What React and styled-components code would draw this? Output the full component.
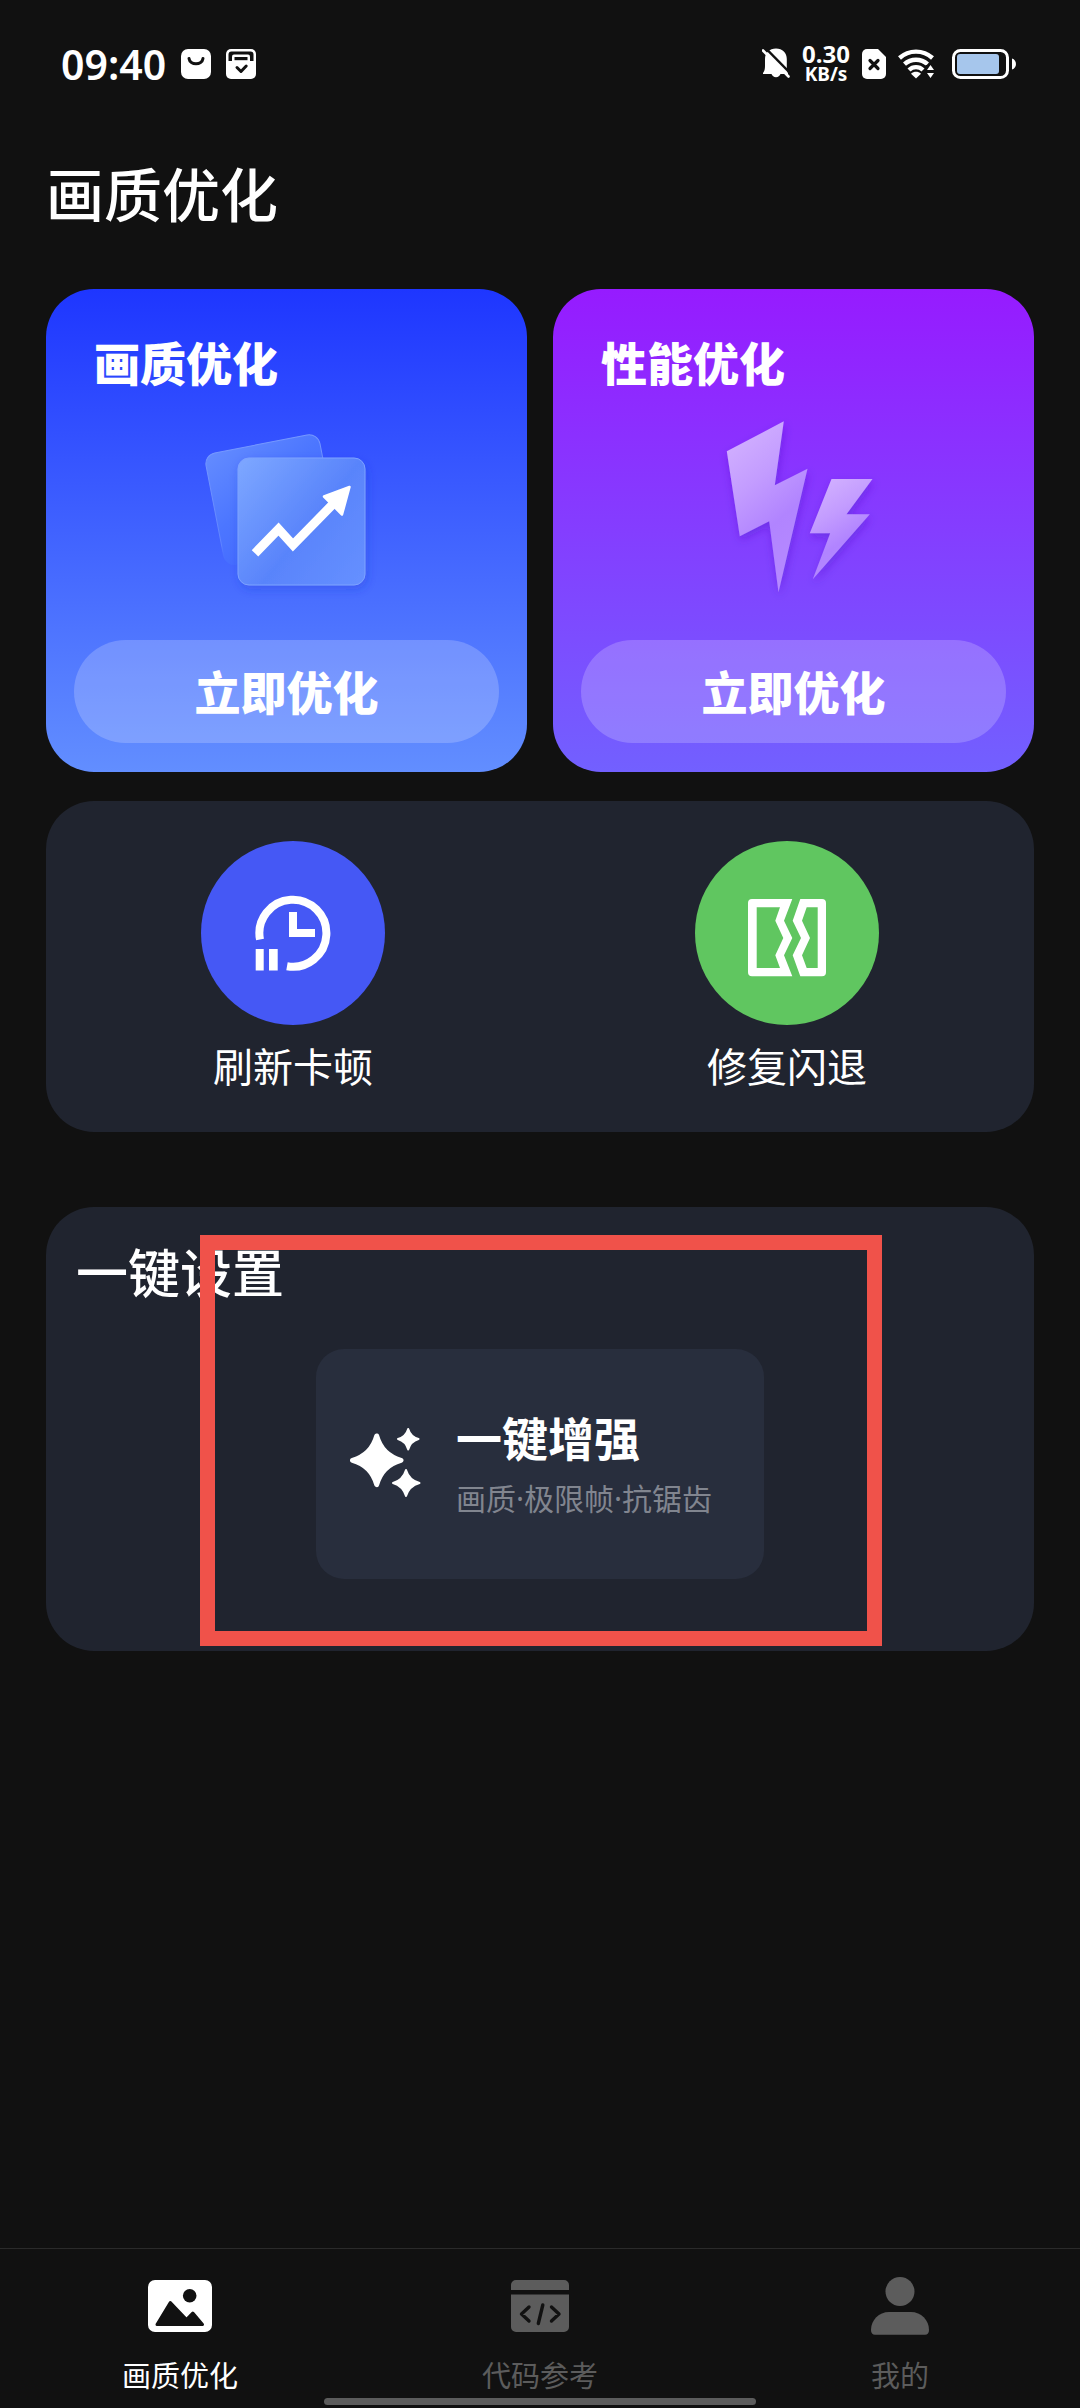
import React from "react";
import styled, { createGlobalStyle } from "styled-components";

const GlobalStyle = createGlobalStyle`
  *, *::before, *::after { box-sizing: border-box; }
  body {
    margin: 0;
    background: #111111;
    color: #ffffff;
    font-family: "Noto Sans", "Noto Sans CJK SC", sans-serif;
  }
  svg { display: block; flex: none; }
`;

const Screen = styled.div`
  min-height: 100vh;
  display: flex;
  flex-direction: column;
`;

const StatusBar = styled.header`
  height: 128px;
  padding: 0 64px 0 61px;
  display: flex;
  align-items: center;
  justify-content: space-between;
`;

const StatusGroup = styled.div`
  display: flex;
  align-items: center;
  gap: ${(p) => p.$gap}px;
`;

const Clock = styled.time`
  font-size: 41px;
  line-height: 48px;
  font-weight: 600;
`;

const NetSpeed = styled.div`
  display: flex;
  flex-direction: column;
  align-items: center;
  font-weight: 700;
`;

const SpeedValue = styled.span`
  font-size: 24px;
  line-height: 20px;
`;

const SpeedUnit = styled.span`
  font-size: 19px;
  line-height: 20px;
`;

const Battery = styled.span`
  margin-left: 6px;
`;

const Content = styled.main`
  flex: 1;
  padding: 27px 46px 54px;
  display: flex;
  flex-direction: column;
`;

const PageTitle = styled.h1`
  margin: 0 0 54px;
  font-size: 58px;
  line-height: 80px;
  font-weight: 500;
`;

const CardRow = styled.section`
  display: grid;
  grid-template-columns: 1fr 1fr;
  gap: 26px;
`;

const BoostCard = styled.article`
  display: flex;
  flex-direction: column;
  align-items: center;
  padding: 44px 28px 29px;
  border-radius: 48px;
  background: linear-gradient(180deg, ${(p) => p.$from}, ${(p) => p.$to});
`;

const BoostTitle = styled.h2`
  align-self: stretch;
  margin: 0 20px 14px;
  font-size: 46px;
  line-height: 60px;
  font-weight: 900;
`;

const BoostButton = styled.button`
  align-self: stretch;
  height: 103px;
  margin-top: 13px;
  border: 0;
  border-radius: 52px;
  background: rgba(255, 255, 255, 0.2);
  color: #ffffff;
  font-family: inherit;
  font-size: 46px;
  line-height: 60px;
  font-weight: 900;
  cursor: pointer;
`;

const Panel = styled.section`
  position: relative;
  border-radius: 48px;
  background: #20242f;
`;

const ToolPanel = styled(Panel)`
  margin-top: 29px;
  padding: 40px 0 37px;
  display: grid;
  grid-template-columns: 1fr 1fr;
`;

const ToolButton = styled.button`
  display: flex;
  flex-direction: column;
  align-items: center;
  gap: 14px;
  padding: 0;
  border: 0;
  background: none;
  color: #ffffff;
  font-family: inherit;
  font-size: 40px;
  line-height: 56px;
  cursor: pointer;
`;

const ToolDisc = styled.span`
  width: 184px;
  height: 184px;
  border-radius: 50%;
  background: ${(p) => p.$color};
`;

const SetupPanel = styled(Panel)`
  margin-top: 75px;
  padding: 30px 30px 72px;
  display: flex;
  flex-direction: column;
  align-items: center;
`;

const SetupTitle = styled.h2`
  align-self: stretch;
  margin: 0 0 40px;
  font-size: 52px;
  line-height: 72px;
  font-weight: 500;
`;

const EnhanceButton = styled.button`
  display: flex;
  align-items: center;
  gap: 34px;
  padding: 59px 52px 60px 34px;
  border: 0;
  border-radius: 28px;
  background: #282e3d;
  color: #ffffff;
  font-family: inherit;
  text-align: left;
  cursor: pointer;
`;

const EnhanceText = styled.span`
  display: flex;
  flex-direction: column;
  gap: 11px;
`;

const EnhanceName = styled.span`
  font-size: 46px;
  line-height: 60px;
  font-weight: 700;
`;

const EnhanceNote = styled.span`
  font-size: 30px;
  line-height: 40px;
  color: #81858f;
`;

const Highlight = styled.div`
  position: absolute;
  inset: 28px 152px 5px 154px;
  border: 15px solid #f0524a;
  pointer-events: none;
`;

const TabBar = styled.nav`
  position: sticky;
  bottom: 0;
  display: grid;
  grid-template-columns: repeat(3, 1fr);
  padding: 25px 0 12px;
  border-top: 1px solid #2b2b2b;
  background: #111111;
`;

const Tab = styled.a`
  display: flex;
  flex-direction: column;
  align-items: center;
  gap: 18px;
  color: ${(p) => (p.$active ? "#ffffff" : "#5c5c5c")};
  font-size: 29px;
  line-height: 40px;
  text-decoration: none;
`;

const HomeIndicator = styled.div`
  position: absolute;
  left: 30%;
  right: 30%;
  bottom: 3px;
  height: 7px;
  border-radius: 4px;
  background: #5c5c5c;
`;

const BagIcon = () => (
  <svg width="30" height="30" viewBox="0 0 30 30" aria-hidden="true">
    <rect width="30" height="30" rx="7" fill="#fff" />
    <path d="M8 9.5c1 7 13 7 14 0" fill="none" stroke="#111" strokeWidth="3" strokeLinecap="round" />
  </svg>
);

const InboxIcon = () => (
  <svg width="30" height="30" viewBox="0 0 30 30" aria-hidden="true">
    <rect width="30" height="30" rx="5" fill="#fff" />
    <path d="M2.5 12V5.5a3 3 0 0 1 3-3h19a3 3 0 0 1 3 3V12z" fill="#111" />
    <path d="M6 12.2V7.5a2 2 0 0 1 2-2h14a2 2 0 0 1 2 2v4.7z" fill="#fff" />
    <rect x="8.5" y="8" width="13" height="3.2" fill="#111" />
    <path d="M11 18.5l4 4 5.2-5.5" fill="none" stroke="#111" strokeWidth="3" strokeLinecap="round" strokeLinejoin="round" />
  </svg>
);

const MutedBellIcon = () => (
  <svg width="28" height="32" viewBox="0 0 28 32" aria-hidden="true">
    <path d="M14 .5C7.500 .5 3 5 3 11v7c0 3-.5 5-2 7v1h8.500a4.800 4.800 0 0 0 9 0H26V25c-1-1-1.200-3-1.200-6v-8C24.800 5 20.500 .5 14 .5z" fill="#fff" />
    <path d="M2 -1.500l26 26.500" stroke="#111" strokeWidth="2.400" />
    <path d="M1 2.500l25.500 26" stroke="#fff" strokeWidth="2.600" strokeLinecap="round" />
  </svg>
);

const SimIcon = () => (
  <svg width="24" height="30" viewBox="0 0 24 30" aria-hidden="true">
    <path d="M5 0h11l8 8v17a5 5 0 0 1-5 5H5a5 5 0 0 1-5-5V5a5 5 0 0 1 5-5z" fill="#fff" />
    <path d="M8 11.5l8 8M16 11.5l-8 8" stroke="#111" strokeWidth="3.2" strokeLinecap="round" />
  </svg>
);

const WifiIcon = () => (
  <svg width="36" height="30" viewBox="0 0 36 30" aria-hidden="true">
    <g fill="none" stroke="#fff" strokeWidth="4.4">
      <path d="M1.500 9C11 .5 25 .5 34.500 9" />
      <path d="M6.500 15.200c6.500-6 16.500-6 23 0" />
      <path d="M11 21c4-3.800 10-3.800 14 0" />
    </g>
    <path d="M18 29.500l-5-4.800c3-2.600 7-2.600 10 0z" fill="#fff" />
    <path d="M27.500 16H36v14h-7z" fill="#111" />
    <path d="M32.500 16l3.500 5h-7zM32.500 29l3.500-5h-7z" fill="#fff" />
  </svg>
);

const BatteryIcon = () => (
  <svg width="64" height="30" viewBox="0 0 64 30" aria-hidden="true">
    <rect x="1.500" y="1.500" width="54" height="27" rx="7" fill="none" stroke="#fff" strokeWidth="3" />
    <rect x="5" y="5" width="42" height="20" rx="3" fill="#a6c6ec" />
    <path d="M60 9.500c5.300 1.500 5.300 9.500 0 11z" fill="#fff" />
  </svg>
);

const ChartArt = () => (
  <svg width="260" height="220" viewBox="0 0 260 220" aria-hidden="true">
    <defs>
      <linearGradient id="sheetBack" x1="0" y1="0" x2="0.6" y2="1">
        <stop offset="0" stopColor="#648cff" />
        <stop offset="0.5" stopColor="#4c76ff" />
        <stop offset="1" stopColor="#4166ff" />
      </linearGradient>
      <linearGradient id="sheetEdge" x1="0" y1="0" x2="0" y2="1">
        <stop offset="0" stopColor="#7598ff" />
        <stop offset="0.8" stopColor="#5f84ff" />
        <stop offset="1" stopColor="#4166ff" stopOpacity="0" />
      </linearGradient>
      <linearGradient id="sheetFront" x1="0" y1="0.1" x2="1" y2="0.9">
        <stop offset="0" stopColor="#7ba5ff" />
        <stop offset="0.55" stopColor="#5984fb" />
        <stop offset="1" stopColor="#658fff" />
      </linearGradient>
      <filter id="sheetShadow" x="-20%" y="-20%" width="140%" height="140%">
        <feDropShadow dx="2" dy="4" stdDeviation="5" floodColor="#1f3bd8" floodOpacity="0.3" />
      </filter>
    </defs>
    <rect width="116" height="114" rx="11" transform="translate(47 48) rotate(-11)" fill="url(#sheetBack)" stroke="url(#sheetEdge)" strokeWidth="1" />
    <rect x="81" y="51" width="127" height="127" rx="11" fill="url(#sheetFront)" stroke="#7da2ff" strokeWidth="1" filter="url(#sheetShadow)" />
    <path d="M98 146.300L121.500 122 136 138 178 95" fill="none" stroke="#fff" strokeWidth="9" />
    <path d="M192.500 80L167 89.500l18 18z" fill="#fff" stroke="#fff" strokeWidth="2.500" strokeLinejoin="round" />
  </svg>
);

const BoltArt = () => (
  <svg width="260" height="220" viewBox="0 0 260 220" aria-hidden="true">
    <defs>
      <linearGradient id="boltFill" x1="0.2" y1="0" x2="0.6" y2="1">
        <stop offset="0" stopColor="#d3b2ff" />
        <stop offset="0.35" stopColor="#c39cff" />
        <stop offset="0.65" stopColor="#b184ff" />
        <stop offset="1" stopColor="#b68aff" />
      </linearGradient>
      <filter id="boltShadow" x="-20%" y="-20%" width="140%" height="140%">
        <feDropShadow dx="1" dy="4" stdDeviation="4" floodColor="#4a1fc8" floodOpacity="0.4" />
      </filter>
    </defs>
    <g fill="url(#boltFill)" filter="url(#boltShadow)">
      <path d="M119.800 14.300L110.800 78.300 143.500 61.700 114.500 185.300 105.200 114.300 75.800 129.300 62.800 44.300z" />
      <path d="M167.500 72H208.500L182.500 107.300H205.800L148.800 172.300 166.200 126.300H145.800z" />
    </g>
  </svg>
);

const LagIcon = () => (
  <svg width="184" height="184" viewBox="0 0 184 184" aria-hidden="true">
    <g fill="none" stroke="#fff" strokeWidth="8">
      <path d="M59 98.500A33.500 33.500 0 1 1 86 125.200" />
      <path d="M92 71V92H114" />
    </g>
    <path d="M54.700 108h8v21.500h-8zM68 108h8.700v21.500H68z" fill="#fff" />
  </svg>
);

const CrashIcon = () => (
  <svg width="184" height="184" viewBox="0 0 184 184" aria-hidden="true">
    <path
      fill="#fff"
      fillRule="evenodd"
      d="M57 58H97.300L89 79.700 97.300 97 89 114.300 97.300 135.300H57a4 4 0 0 1-4-4V62a4 4 0 0 1 4-4zM61.700 66.300V127H85L80.300 114.300 88.300 97 80.300 79.700 85 66.300z"
    />
    <path
      fill="#fff"
      fillRule="evenodd"
      d="M105.300 58H127a4 4 0 0 1 4 4V131.300a4 4 0 0 1-4 4H105.300L97.700 114.300 106 97 97.700 79.700zM111.700 66.300L107 79.700 115 97 107 114.300 111.700 127H122.700V66.300z"
    />
  </svg>
);

const SparklesIcon = () => (
  <svg width="72" height="72" viewBox="0 0 72 72" aria-hidden="true">
    <g fill="#fff" stroke="#fff" strokeLinejoin="round">
      <path strokeWidth="5" d="M26.700 8Q32 27 51 32.300 32 37.600 26.700 56.600 21.400 37.600 2.500 32.300 21.400 27 26.700 8z" />
      <path strokeWidth="2" d="M58.200 1Q60.500 8.700 68.500 11 60.500 13.300 58.200 21.500 55.900 13.300 48 11 55.900 8.700 58.200 1z" />
      <path strokeWidth="2" d="M56 42Q59 52 69.500 55 59 58 56 68 53 58 43 55 53 52 56 42z" />
    </g>
  </svg>
);

const PictureIcon = () => (
  <svg width="64" height="64" viewBox="0 0 64 64" aria-hidden="true">
    <rect y="6" width="64" height="52" rx="7" fill="currentColor" />
    <circle cx="41.700" cy="21.700" r="6.800" fill="#111" />
    <path d="M9 50.500L22.300 28.500 38.500 45.500 44.800 39 54.500 50.500z" fill="#111" stroke="#111" strokeWidth="3" strokeLinejoin="round" />
  </svg>
);

const CodeIcon = () => (
  <svg width="64" height="64" viewBox="0 0 64 64" aria-hidden="true">
    <path d="M3 16v-5a5 5 0 0 1 5-5h48a5 5 0 0 1 5 5v5zM3 20.500h58V53a5 5 0 0 1-5 5H8a5 5 0 0 1-5-5z" fill="currentColor" />
    <path d="M21 33l-7.500 7 7.500 7M43.500 33l7.500 7-7.500 7M34.800 31l-4.500 18.500" fill="none" stroke="#111" strokeWidth="3.400" strokeLinecap="round" strokeLinejoin="round" />
  </svg>
);

const PersonIcon = () => (
  <svg width="64" height="64" viewBox="0 0 64 64" aria-hidden="true">
    <circle cx="32" cy="17.500" r="14.500" fill="currentColor" />
    <path d="M3 56c0-10 8-18 18-18h22c10 0 18 8 18 18 0 3-1.500 4.700-4 4.700H7C4.500 60.700 3 59 3 56z" fill="currentColor" />
  </svg>
);

const boosts = [
  { title: "画质优化", from: "#1e36ff", to: "#628eff", Art: ChartArt },
  { title: "性能优化", from: "#961bff", to: "#7260ff", Art: BoltArt },
];

const tools = [
  { label: "刷新卡顿", color: "#4558f5", Icon: LagIcon },
  { label: "修复闪退", color: "#60c660", Icon: CrashIcon },
];

const tabs = [
  { label: "画质优化", href: "#quality", Icon: PictureIcon },
  { label: "代码参考", href: "#code", Icon: CodeIcon },
  { label: "我的", href: "#me", Icon: PersonIcon },
];

export default function App() {
  return (
    <Screen>
      <GlobalStyle />
      <StatusBar>
        <StatusGroup $gap={15}>
          <Clock>09:40</Clock>
          <BagIcon />
          <InboxIcon />
        </StatusGroup>
        <StatusGroup $gap={12}>
          <MutedBellIcon />
          <NetSpeed>
            <SpeedValue>0.30</SpeedValue>
            <SpeedUnit>KB/s</SpeedUnit>
          </NetSpeed>
          <SimIcon />
          <WifiIcon />
          <Battery>
            <BatteryIcon />
          </Battery>
        </StatusGroup>
      </StatusBar>

      <Content>
        <PageTitle>画质优化</PageTitle>

        <CardRow>
          {boosts.map(({ title, from, to, Art }) => (
            <BoostCard key={title} $from={from} $to={to}>
              <BoostTitle>{title}</BoostTitle>
              <Art />
              <BoostButton type="button">立即优化</BoostButton>
            </BoostCard>
          ))}
        </CardRow>

        <ToolPanel>
          {tools.map(({ label, color, Icon }) => (
            <ToolButton key={label} type="button">
              <ToolDisc $color={color}>
                <Icon />
              </ToolDisc>
              {label}
            </ToolButton>
          ))}
        </ToolPanel>

        <SetupPanel>
          <SetupTitle>一键设置</SetupTitle>
          <EnhanceButton type="button">
            <SparklesIcon />
            <EnhanceText>
              <EnhanceName>一键增强</EnhanceName>
              <EnhanceNote>画质·极限帧·抗锯齿</EnhanceNote>
            </EnhanceText>
          </EnhanceButton>
          <Highlight />
        </SetupPanel>
      </Content>

      <TabBar>
        {tabs.map(({ label, href, Icon }, i) => (
          <Tab key={label} href={href} $active={i === 0} aria-current={i === 0 ? "page" : undefined}>
            <Icon />
            {label}
          </Tab>
        ))}
        <HomeIndicator />
      </TabBar>
    </Screen>
  );
}
